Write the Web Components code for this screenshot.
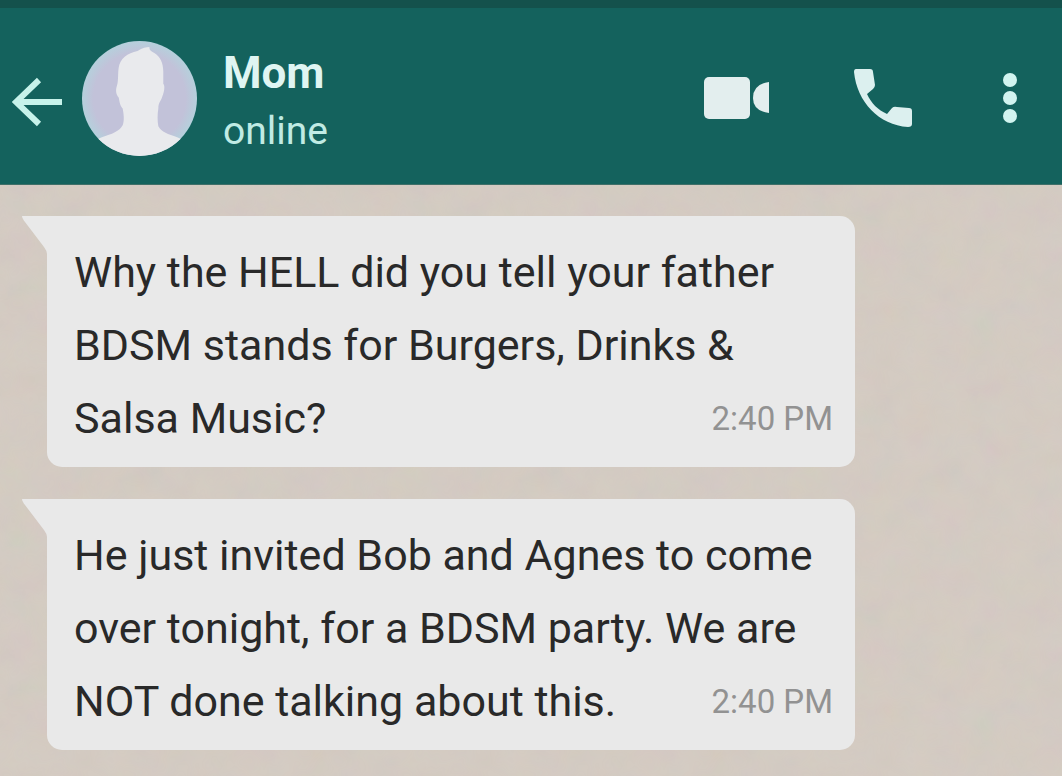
<!DOCTYPE html>
<html lang="en">
<head>
<meta charset="utf-8">
<meta name="viewport" content="width=device-width, initial-scale=1">
<title>Chat with Mom</title>
<style>
html, body { margin: 0; min-height: 100%; background: #d4cbc2; }
body { font-family: Roboto, "Liberation Sans", sans-serif; }
</style>
</head>
<body>
<chat-screen>
  <chat-header slot="header"><span slot="name">Mom</span><span slot="status">online</span></chat-header>
  <chat-message time="2:40 PM">Why the HELL did you tell your father BDSM stands for Burgers, Drinks &amp; Salsa Music?</chat-message>
  <chat-message time="2:40 PM">He just invited Bob and Agnes to come over tonight, for a BDSM party. We are NOT done talking about this.</chat-message>
</chat-screen>
<script>
const define = (name, html, setup) => customElements.define(name, class extends HTMLElement {
  connectedCallback() {
    if (this.shadowRoot) return;
    this.attachShadow({ mode: "open" }).innerHTML = html;
    if (setup) setup(this, this.shadowRoot);
  }
});

define("chat-screen", `
<style>
:host { display: flex; flex-direction: column; min-height: 100vh; background-color: #d4cbc2;
  background-image: url("data:image/svg+xml,%3Csvg xmlns='http://www.w3.org/2000/svg' width='400' height='400'%3E%3Cfilter id='n' x='0' y='0' width='100%25' height='100%25'%3E%3CfeTurbulence type='fractalNoise' baseFrequency='.03' numOctaves='3' seed='4' stitchTiles='stitch'/%3E%3C/filter%3E%3Crect width='400' height='400' filter='url(%23n)' opacity='.07'/%3E%3C/svg%3E"); }
main { display: flex; flex-direction: column; align-items: flex-start; gap: 32px; padding: 31px 24px 24px 47px; }
</style>
<slot name="header"></slot>
<main><slot></slot></main>`);

define("user-avatar", `
<style>
:host { display: block; flex: none; width: 115px; height: 115px; }
svg { display: block; width: 100%; height: 100%; }
</style>
<svg viewBox="0 0 116 116" role="img" aria-label="Profile picture">
  <defs><clipPath id="c"><circle cx="58" cy="58" r="58"/></clipPath>
  <radialGradient id="g"><stop offset=".8" stop-color="#c2c2d9"/><stop offset="1" stop-color="#b5d0dc"/></radialGradient></defs>
  <g clip-path="url(#c)">
    <rect width="116" height="116" fill="url(#g)"/>
    <path fill="#e9eaed" d="M37 27C38 18 46 12 56 10C61 7 65 6 68 6C68 9 69 10 73 12C79 16 82 22 82 31L82 43C84 45 83 51 81 56C80 60 77 62 77 68C76 74 76 80 77 86C80 92 87 94 96 97L116 106V116H0V106L20 97C30 94 38 91 41 85C43 80 42 73 41 68C38 65 38 61 37 57C34 54 34 49 35 46C37 41 36 33 37 27Z"/>
  </g>
</svg>`);

define("icon-button", `
<style>
:host { display: block; flex: none; }
button { display: flex; align-items: center; justify-content: center; width: 100%; height: 100%; margin: 0; padding: 0; border: 0; background: none; cursor: pointer; }
svg { display: block; }
</style>
<button type="button"></button>`, (host, root) => {
  const icons = {
    back: `<svg width="50" height="50" viewBox="0 0 50 50" fill="none" stroke="#c7f2ea" stroke-width="6"><path d="M27 3L4 25L27 47M4 25H50"/></svg>`,
    video: `<svg width="66" height="42" viewBox="0 0 66 42" fill="#e3eeee"><rect width="46" height="42" rx="5"/><path d="M65 5V36Q49 34 49 21Q49 7 65 5Z"/></svg>`,
    phone: `<svg width="58" height="58" viewBox="0 0 58 58" fill="#dcf0ef"><path d="M2 0H16Q19 0 19 3L21 16Q21 18 19 20L13 25C17 34 24 41 33 45L38 39Q40 37 43 38L55 39Q58 39 58 42V55Q58 58 54 58C25 56 3 33 0 3Q0 0 2 0Z"/></svg>`,
    menu: `<svg width="16" height="52" viewBox="0 0 16 52" fill="#d2f4f0"><circle cx="8" cy="8" r="7"/><circle cx="8" cy="26" r="7"/><circle cx="8" cy="44" r="7"/></svg>`
  };
  const b = root.querySelector("button");
  b.innerHTML = icons[host.getAttribute("icon")];
  b.setAttribute("aria-label", host.getAttribute("label"));
});

define("chat-header", `
<style>
:host { display: block; background: #14625d; border-top: 8px solid #14514c; border-bottom: 1px solid #3f6f68; }
header { display: flex; align-items: center; min-height: 176px; padding: 4px 44px 0 12px; box-sizing: border-box; }
.back { width: 50px; height: 64px; margin-top: 8px; }
user-avatar { margin-left: 20px; }
.who { flex: 1; min-width: 0; margin: 10px 0 0 26px; color: #dff5f2; }
h1, p { margin: 0; }
h1 { font-size: 44px; line-height: 56px; font-weight: 700; }
p { font-size: 39px; line-height: 60px; color: #c0ebe4; }
nav { display: flex; align-items: center; gap: 84px; }
nav .menu { margin-left: 6px; }
</style>
<header>
  <icon-button class="back" icon="back" label="Back"></icon-button>
  <user-avatar></user-avatar>
  <div class="who"><h1><slot name="name"></slot></h1><p><slot name="status"></slot></p></div>
  <nav aria-label="Chat actions">
    <icon-button icon="video" label="Video call"></icon-button>
    <icon-button icon="phone" label="Voice call"></icon-button>
    <icon-button class="menu" icon="menu" label="More options"></icon-button>
  </nav>
</header>`);

define("chat-message", `
<style>
:host { display: block; width: 100%; max-width: 808px; }
article { position: relative; display: flow-root; box-sizing: border-box; padding: 20px 22px 12px 27px; background: #e9e9e9; border-radius: 0 15px 15px 15px; color: #292929; font-size: 43px; line-height: 73px; }
.tail { position: absolute; top: 0; right: 100%; width: 25px; height: 38px; fill: #e9e9e9; }
time { float: right; font-size: 33px; color: #929292; }
</style>
<article>
  <svg class="tail" viewBox="0 0 25 38" aria-hidden="true"><path d="M0 0H25V38Q25 35 22 31L3 6Q0 2 0 0Z"/></svg>
  <slot></slot><time></time>
</article>`, (host, root) => {
  root.querySelector("time").textContent = host.getAttribute("time");
});
</script>
</body>
</html>
